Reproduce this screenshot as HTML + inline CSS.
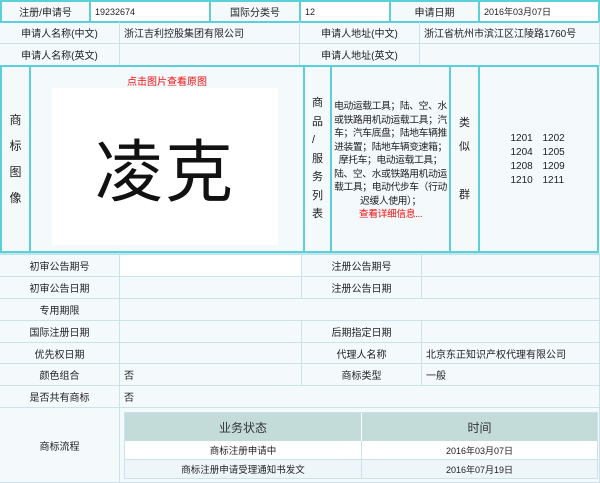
<!DOCTYPE html>
<html><head><meta charset="utf-8"><style>
*{margin:0;padding:0;box-sizing:border-box}
body{width:600px;height:483px;background:#f4f9fc;font-family:"Liberation Sans","Noto Sans CJK SC",sans-serif;font-size:10px;color:#222;position:relative;overflow:hidden}
.c{position:absolute;display:flex;align-items:center;justify-content:center;border-right:1px solid #c9e2ec;border-bottom:1px solid #c9e2ec}
.l{justify-content:flex-start;padding-left:4px}
.w{background:#fff}
.t{border:2px solid #5ccfd8}
.v{flex-direction:column;line-height:20px;font-size:11px}
</style></head><body>
<div class="c t" style="left:0;top:0;width:91px;height:23px">注册/申请号</div>
<div class="c t w l" style="left:89px;top:0;width:122px;height:23px;font-size:9px">19232674</div>
<div class="c t" style="left:209px;top:0;width:92px;height:23px">国际分类号</div>
<div class="c t w l" style="left:299px;top:0;width:92px;height:23px;font-size:9px">12</div>
<div class="c t" style="left:389px;top:0;width:91px;height:23px">申请日期</div>
<div class="c t w l" style="left:478px;top:0;width:122px;height:23px;font-size:9px">2016年03月07日</div>
<div class="c" style="left:0;top:22px;width:120px;height:22px">申请人名称(中文)</div>
<div class="c l" style="left:120px;top:22px;width:180px;height:22px">浙江吉利控股集团有限公司</div>
<div class="c" style="left:300px;top:22px;width:120px;height:22px">申请人地址(中文)</div>
<div class="c l" style="left:420px;top:22px;width:180px;height:22px">浙江省杭州市滨江区江陵路1760号</div>
<div class="c" style="left:0;top:44px;width:120px;height:22px">申请人名称(英文)</div>
<div class="c l" style="left:120px;top:44px;width:180px;height:22px"></div>
<div class="c" style="left:300px;top:44px;width:120px;height:22px">申请人地址(英文)</div>
<div class="c l" style="left:420px;top:44px;width:180px;height:22px"></div>
<div class="c t v" style="left:0;top:65px;width:31px;height:188px;font-size:12px;line-height:26px">商<br>标<br>图<br>像</div>
<div class="c t" style="left:29px;top:65px;width:276px;height:188px;align-items:flex-start"></div>
<div style="position:absolute;left:30px;top:73px;width:274px;text-align:center;color:#f01010;font-size:10px">点击图片查看原图</div>
<div style="position:absolute;left:52px;top:88px;width:226px;height:157px;background:#fff;display:flex;align-items:center;justify-content:center;font-size:68px;color:#111;font-family:'Noto Sans CJK SC',sans-serif;letter-spacing:2px">凌克</div>
<div class="c t" style="left:303px;top:65px;width:29px;height:188px;flex-direction:column;font-size:11px;line-height:18.5px">商<br>品<br>/<br>服<br>务<br>列<br>表</div>
<div class="c t" style="left:330px;top:65px;width:121px;height:188px;flex-direction:column;text-align:center;line-height:13.5px;font-size:9.8px;letter-spacing:-0.4px;white-space:nowrap;padding-top:4px">电动运载工具；陆、空、水<br>或铁路用机动运载工具；汽<br>车；汽车底盘；陆地车辆推<br>进装置；陆地车辆变速箱；<br>摩托车；电动运载工具；<br>陆、空、水或铁路用机动运<br>载工具；电动代步车（行动<br>迟缓人使用）；<br><span style="color:#f01010">查看详细信息...</span></div>
<div class="c t" style="left:449px;top:65px;width:31px;height:188px;flex-direction:column;font-size:11px;line-height:24px">类<br>似<br><br>群</div>
<div class="c t" style="left:478px;top:65px;width:121px;height:188px"><div style="display:grid;grid-template-columns:32px 32px;row-gap:3px;font-size:10px;margin-left:8px"><span>1201</span><span>1202</span><span>1204</span><span>1205</span><span>1208</span><span>1209</span><span>1210</span><span>1211</span></div></div>
<div style="position:absolute;left:0;top:253px;width:600px;height:2px;background:#bfe6ea"></div>
<div class="c" style="left:0;top:255px;width:120px;height:22px">初审公告期号</div>
<div class="c" style="left:120px;top:255px;width:182px;height:22px;background:#fff"></div>
<div class="c" style="left:302px;top:255px;width:120px;height:22px">注册公告期号</div>
<div class="c" style="left:422px;top:255px;width:178px;height:22px"></div>
<div class="c" style="left:0;top:277px;width:120px;height:22px">初审公告日期</div>
<div class="c" style="left:120px;top:277px;width:182px;height:22px"></div>
<div class="c" style="left:302px;top:277px;width:120px;height:22px">注册公告日期</div>
<div class="c" style="left:422px;top:277px;width:178px;height:22px"></div>
<div class="c" style="left:0;top:299px;width:120px;height:22px">专用期限</div>
<div class="c" style="left:120px;top:299px;width:480px;height:22px"></div>
<div class="c" style="left:0;top:321px;width:120px;height:22px">国际注册日期</div>
<div class="c" style="left:120px;top:321px;width:182px;height:22px"></div>
<div class="c" style="left:302px;top:321px;width:120px;height:22px">后期指定日期</div>
<div class="c" style="left:422px;top:321px;width:178px;height:22px"></div>
<div class="c" style="left:0;top:343px;width:120px;height:21px">优先权日期</div>
<div class="c" style="left:120px;top:343px;width:182px;height:21px"></div>
<div class="c" style="left:302px;top:343px;width:120px;height:21px">代理人名称</div>
<div class="c l" style="left:422px;top:343px;width:178px;height:21px">北京东正知识产权代理有限公司</div>
<div class="c" style="left:0;top:364px;width:120px;height:22px">颜色组合</div>
<div class="c l" style="left:120px;top:364px;width:182px;height:22px">否</div>
<div class="c" style="left:302px;top:364px;width:120px;height:22px">商标类型</div>
<div class="c l" style="left:422px;top:364px;width:178px;height:22px">一般</div>
<div class="c" style="left:0;top:386px;width:120px;height:22px">是否共有商标</div>
<div class="c l" style="left:120px;top:386px;width:480px;height:22px">否</div>
<div class="c" style="left:0;top:408px;width:120px;height:75px">商标流程</div>
<div class="c" style="left:120px;top:408px;width:480px;height:75px;background:#f4f9fc"></div>
<div style="position:absolute;left:124px;top:412px;width:474px;height:67px;border:1px solid #c9e2ec">
<div style="display:flex;height:28px;background:#c3dcda;font-size:12px;color:#333"><div style="width:237px;display:flex;align-items:center;justify-content:center;border-right:1px solid #fff">业务状态</div><div style="flex:1;display:flex;align-items:center;justify-content:center">时间</div></div>
<div style="display:flex;height:19px;background:#fff;border-bottom:1px solid #c9e2ec;font-size:9.5px"><div style="width:237px;display:flex;align-items:center;justify-content:center;border-right:1px solid #c9e2ec">商标注册申请中</div><div style="flex:1;display:flex;align-items:center;justify-content:center;font-size:9px">2016年03月07日</div></div>
<div style="display:flex;height:18px;background:#eef6fa;font-size:9.5px"><div style="width:237px;display:flex;align-items:center;justify-content:center;border-right:1px solid #c9e2ec">商标注册申请受理通知书发文</div><div style="flex:1;display:flex;align-items:center;justify-content:center;font-size:9px">2016年07月19日</div></div>
</div>
</body></html>
